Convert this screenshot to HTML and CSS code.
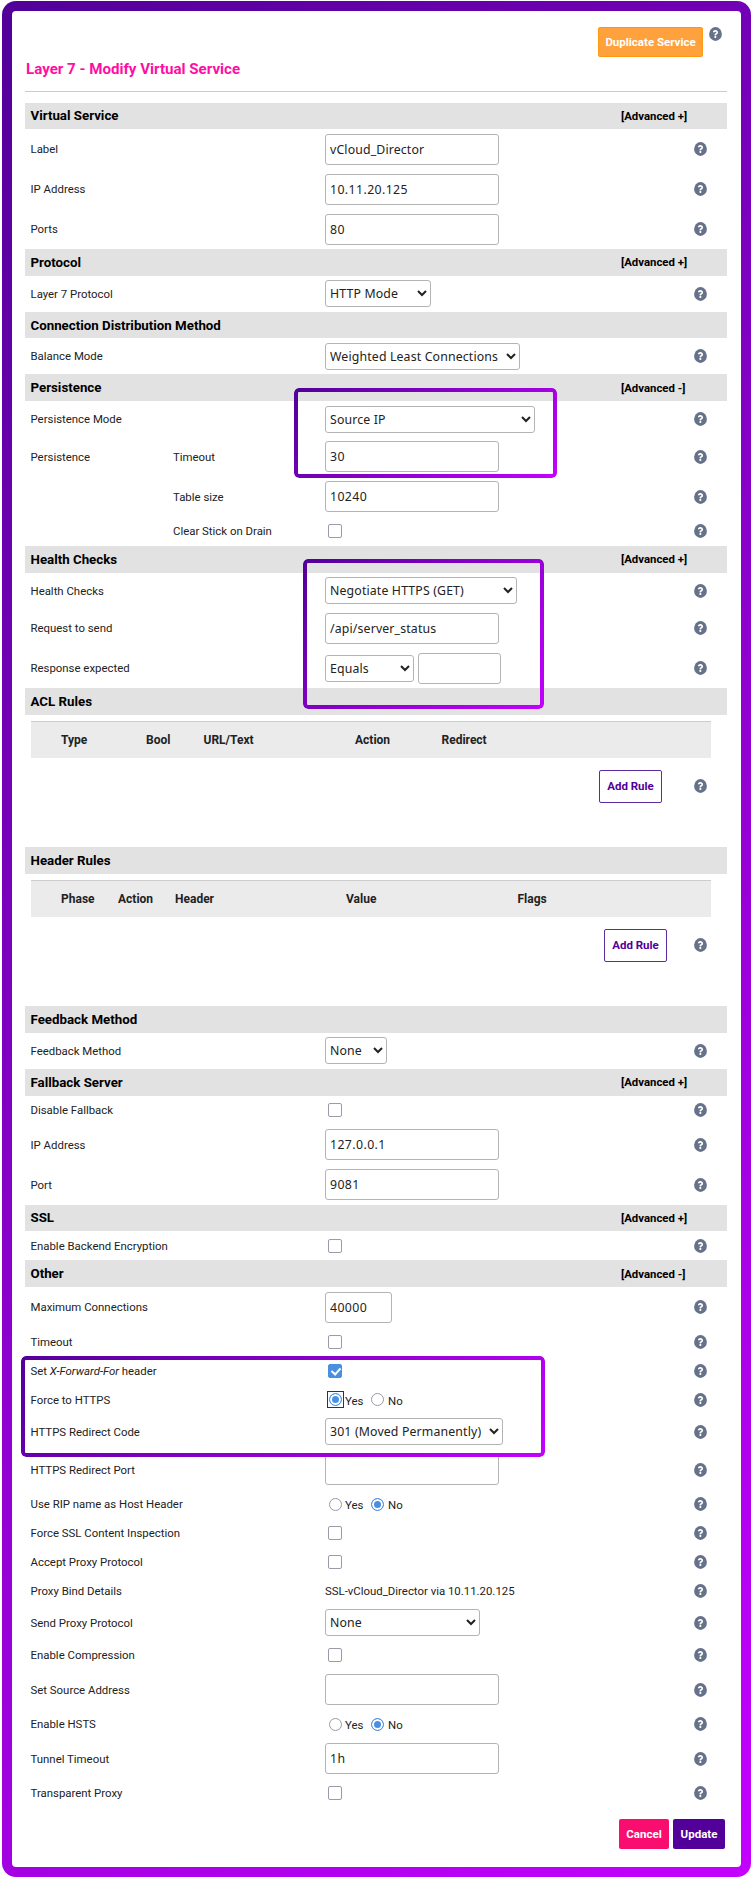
FILE: index.html
```html
<!DOCTYPE html>
<html lang="en">
<head>
  <meta charset="UTF-8">
  <title>Layer 7 - Modify Virtual Service</title>
  <link rel="stylesheet" href="styles.css">
</head>
<body>

  <!-- Help icon, reused on every row -->
  <svg class="sprite" width="0" height="0">
    <symbol id="help" viewBox="0 0 512 512" preserveAspectRatio="none">
      <circle cx="256" cy="256" r="252" fill="#66718a"/>
      <path fill="#fff" transform="translate(31 33) scale(.86)" d="M262.655 90c-54.497 0-89.255 22.957-116.549 63.758-3.536 5.286-2.353 12.415 2.715 16.258l34.699 26.31c5.205 3.947 12.621 3.008 16.665-2.122 17.864-22.658 30.113-35.797 57.303-35.797 20.429 0 45.698 13.148 45.698 32.958 0 14.976-12.363 22.667-32.534 33.976C247.128 238.528 216 254.941 216 296v4c0 6.627 5.373 12 12 12h56c6.627 0 12-5.373 12-12v-1.333c0-28.462 83.186-29.647 83.186-106.667 0-58.002-60.165-102-116.531-102zM256 338c-25.365 0-46 20.635-46 46 0 25.364 20.635 46 46 46s46-20.636 46-46c0-25.364-20.635-46-46-46z"/>
    </symbol>
  </svg>

  <div class="frame">
    <div class="page">

      <div class="top">
        <h1>Layer 7 - Modify Virtual Service</h1>
        <button class="btn duplicate">Duplicate Service</button>
        <svg class="help"><use href="#help"/></svg>
      </div>

      <!-- Virtual Service -->
      <h2>Virtual Service <a class="adv">[Advanced +]</a></h2>
      <div class="row text"><label>Label</label><div class="field"><input type="text" value="vCloud_Director"></div><svg class="help"><use href="#help"/></svg></div>
      <div class="row text"><label>IP Address</label><div class="field"><input type="text" class="num" value="10.11.20.125"></div><svg class="help"><use href="#help"/></svg></div>
      <div class="row text"><label>Ports</label><div class="field"><input type="text" class="num" value="80"></div><svg class="help"><use href="#help"/></svg></div>

      <!-- Protocol -->
      <h2>Protocol <a class="adv">[Advanced +]</a></h2>
      <div class="row pick"><label>Layer 7 Protocol</label><div class="field"><select class="w-http"><option>HTTP Mode</option></select></div><svg class="help"><use href="#help"/></svg></div>

      <!-- Connection Distribution Method -->
      <h2>Connection Distribution Method</h2>
      <div class="row pick"><label>Balance Mode</label><div class="field"><select class="w-balance"><option>Weighted Least Connections</option></select></div><svg class="help"><use href="#help"/></svg></div>

      <!-- Persistence -->
      <h2>Persistence <a class="adv">[Advanced -]</a></h2>
      <div class="row pick"><label>Persistence Mode</label><div class="field"><select class="w-persist"><option>Source IP</option></select></div><svg class="help"><use href="#help"/></svg></div>
      <div class="row text"><label>Persistence</label><label class="sub">Timeout</label><div class="field"><input type="text" class="num" value="30"></div><svg class="help"><use href="#help"/></svg></div>
      <div class="row text"><label class="sub">Table size</label><div class="field"><input type="text" class="num" value="10240"></div><svg class="help"><use href="#help"/></svg></div>
      <div class="row check"><label class="sub">Clear Stick on Drain</label><div class="field"><input type="checkbox"></div><svg class="help"><use href="#help"/></svg></div>

      <!-- Health Checks -->
      <h2>Health Checks <a class="adv">[Advanced +]</a></h2>
      <div class="row pick"><label>Health Checks</label><div class="field"><select class="w-health"><option>Negotiate HTTPS (GET)</option></select></div><svg class="help"><use href="#help"/></svg></div>
      <div class="row text"><label>Request to send</label><div class="field"><input type="text" value="/api/server_status"></div><svg class="help"><use href="#help"/></svg></div>
      <div class="row text"><label>Response expected</label><div class="field"><select class="w-equals"><option>Equals</option></select><input type="text" class="w-expected"></div><svg class="help"><use href="#help"/></svg></div>

      <!-- ACL Rules -->
      <h2>ACL Rules</h2>
      <div class="rules">
        <div class="rules-head acl"><span>Type</span><span>Bool</span><span>URL/Text</span><span>Action</span><span>Redirect</span></div>
        <div class="rules-foot"><button class="btn add">Add Rule</button><svg class="help"><use href="#help"/></svg></div>
      </div>

      <!-- Header Rules -->
      <h2>Header Rules</h2>
      <div class="rules">
        <div class="rules-head hdr"><span>Phase</span><span>Action</span><span>Header</span><span>Value</span><span>Flags</span></div>
        <div class="rules-foot near"><button class="btn add">Add Rule</button><svg class="help"><use href="#help"/></svg></div>
      </div>

      <!-- Feedback Method -->
      <h2>Feedback Method</h2>
      <div class="row pick"><label>Feedback Method</label><div class="field"><select class="w-feedback"><option>None</option></select></div><svg class="help"><use href="#help"/></svg></div>

      <!-- Fallback Server -->
      <h2>Fallback Server <a class="adv">[Advanced +]</a></h2>
      <div class="row check"><label>Disable Fallback</label><div class="field"><input type="checkbox"></div><svg class="help"><use href="#help"/></svg></div>
      <div class="row text"><label>IP Address</label><div class="field"><input type="text" class="num" value="127.0.0.1"></div><svg class="help"><use href="#help"/></svg></div>
      <div class="row text"><label>Port</label><div class="field"><input type="text" class="num" value="9081"></div><svg class="help"><use href="#help"/></svg></div>

      <!-- SSL -->
      <h2>SSL <a class="adv">[Advanced +]</a></h2>
      <div class="row check"><label>Enable Backend Encryption</label><div class="field"><input type="checkbox"></div><svg class="help"><use href="#help"/></svg></div>

      <!-- Other -->
      <h2>Other <a class="adv">[Advanced -]</a></h2>
      <div class="row text"><label>Maximum Connections</label><div class="field"><input type="text" class="num w-max" value="40000"></div><svg class="help"><use href="#help"/></svg></div>
      <div class="row check"><label>Timeout</label><div class="field"><input type="checkbox"></div><svg class="help"><use href="#help"/></svg></div>
      <div class="row check"><label>Set <em>X-Forward-For</em> header</label><div class="field"><input type="checkbox" checked></div><svg class="help"><use href="#help"/></svg></div>
      <div class="row check"><label>Force to HTTPS</label><div class="field"><span class="focused"><input type="radio" name="https" checked></span><span class="opt">Yes</span><input type="radio" name="https"><span class="opt">No</span></div><svg class="help"><use href="#help"/></svg></div>
      <div class="row pick"><label>HTTPS Redirect Code</label><div class="field"><select class="w-code"><option>301 (Moved Permanently)</option></select></div><svg class="help"><use href="#help"/></svg></div>
      <div class="row text"><label>HTTPS Redirect Port</label><div class="field"><input type="text"></div><svg class="help"><use href="#help"/></svg></div>
      <div class="row check"><label>Use RIP name as Host Header</label><div class="field"><input type="radio" name="rip"><span class="opt">Yes</span><input type="radio" name="rip" checked><span class="opt">No</span></div><svg class="help"><use href="#help"/></svg></div>
      <div class="row check"><label>Force SSL Content Inspection</label><div class="field"><input type="checkbox"></div><svg class="help"><use href="#help"/></svg></div>
      <div class="row check"><label>Accept Proxy Protocol</label><div class="field"><input type="checkbox"></div><svg class="help"><use href="#help"/></svg></div>
      <div class="row plain"><label>Proxy Bind Details</label><div class="field">SSL-vCloud_Director via 10.11.20.125</div><svg class="help"><use href="#help"/></svg></div>
      <div class="row pick"><label>Send Proxy Protocol</label><div class="field"><select class="w-proxy"><option>None</option></select></div><svg class="help"><use href="#help"/></svg></div>
      <div class="row check"><label>Enable Compression</label><div class="field"><input type="checkbox"></div><svg class="help"><use href="#help"/></svg></div>
      <div class="row text"><label>Set Source Address</label><div class="field"><input type="text"></div><svg class="help"><use href="#help"/></svg></div>
      <div class="row check"><label>Enable HSTS</label><div class="field"><input type="radio" name="hsts"><span class="opt">Yes</span><input type="radio" name="hsts" checked><span class="opt">No</span></div><svg class="help"><use href="#help"/></svg></div>
      <div class="row text"><label>Tunnel Timeout</label><div class="field"><input type="text" class="num" value="1h"></div><svg class="help"><use href="#help"/></svg></div>
      <div class="row check"><label>Transparent Proxy</label><div class="field"><input type="checkbox"></div><svg class="help"><use href="#help"/></svg></div>

      <div class="actions">
        <button class="btn cancel">Cancel</button>
        <button class="btn update">Update</button>
      </div>
    </div>

    <!-- Callout outlines over the form -->
    <div class="callout callout-persist"></div>
    <div class="callout callout-health"></div>
    <div class="callout callout-https"></div>
  </div>

</body>
</html>
```
FILE: styles.css
```css
* {
  box-sizing: border-box;
}

body {
  margin: 0;
  background: #fff;
  color: #222;
  font-family: Roboto, sans-serif;
  font-size: 11.4px;
}

.sprite {
  position: absolute;
}

/* Gradient frame round the whole page */
.frame {
  position: relative;
  width: 749px;
  height: 1876px;
  margin: 1px 0 0 2px;
  padding: 10px;
  border-radius: 14px;
  background: linear-gradient(135deg, #520099, #c400ff);
}

.page {
  height: 100%;
  padding: 0 14px 0 13px;
  border-radius: 4px;
  background: #fff;
}

/* Title and duplicate button */
.top {
  display: flex;
  align-items: flex-start;
  height: 81px;
  margin-bottom: 10.5px;
  padding: 16px 5px 0 1px;
  border-bottom: 1px solid #ccc;
}

h1 {
  flex: 1;
  margin: 33px 0 0;
  color: #ff0da4;
  font-size: 15.1px;
  line-height: 18px;
  font-weight: bold;
}

.top .help {
  margin-left: 6px;
}

/* Section bars */
h2 {
  display: flex;
  align-items: center;
  height: 26.8px;
  margin: 0;
  padding: 0 0 0 5.5px;
  background: #e2e2e2;
  color: #000;
  font-size: 13.3px;
  font-weight: bold;
}

.adv {
  width: 106px;
  margin-left: auto;
  font-size: 11.4px;
}

/* Form rows: label, sub label, field, help */
.row {
  display: grid;
  grid-template-columns: 142.5px 152px 1fr 14px;
  align-items: center;
  padding: 0 19px 0 5.5px;
}

.row.text { height: 39.9px; }
.row.pick { height: 35.9px; }
.row.check { height: 29px; }
.row.plain { height: 28px; }

label {
  grid-column: 1;
  white-space: nowrap;
}

label.sub {
  grid-column: 2;
}

.field {
  grid-column: 3;
  display: flex;
  align-items: center;
}

.help {
  width: 13px;
  height: 14px;
}

.row .help {
  grid-column: 4;
}

/* Controls */
input[type="text"], select {
  margin: 0;
  border: 1px solid #b4b4b4;
  border-radius: 3px;
  background-color: #fff;
  color: #222;
  font-family: "Noto Sans", sans-serif;
  font-size: 12.3px;
  letter-spacing: 0.15px;
}

input[type="text"] {
  width: 174px;
  height: 31px;
  padding: 0 4px;
}

input.num {
  letter-spacing: 0.4px;
}

select {
  height: 27px;
  padding: 0;
}

.w-http { width: 106px; }
.w-balance { width: 195px; }
.w-persist { width: 210px; }
.w-health { width: 192px; }
.w-equals { width: 89px; }
.w-feedback { width: 62px; }
.w-code { width: 178px; }
.w-proxy { width: 155px; }
input.w-expected { width: 83px; margin-left: 4px; }
input.w-max { width: 67px; }

input[type="checkbox"], input[type="radio"] {
  appearance: none;
  width: 14px;
  height: 14px;
  margin: 0 0 0 3px;
  border: 1px solid #9a9aa8;
  border-radius: 2px;
  background: #fff;
}

input[type="checkbox"]:checked {
  border-color: #4a90e2;
  background: #4a90e2;
}

input[type="checkbox"]:checked::after {
  content: "";
  display: block;
  width: 4px;
  height: 7px;
  margin: 1px 0 0 4px;
  border: solid #fff;
  border-width: 0 2px 2px 0;
  transform: rotate(42deg);
}

input[type="radio"] {
  width: 13px;
  height: 13px;
  margin-left: 4px;
  border-radius: 50%;
}

input[type="radio"]:checked {
  border-color: #4a90e2;
  background: #4a90e2;
  box-shadow: inset 0 0 0 2px #fff;
}

/* Square focus ring round the radio */
.focused {
  display: flex;
  margin-left: 4px;
  outline: 1px solid #333;
  outline-offset: 1px;
}

.focused input[type="radio"] {
  margin-left: 0;
}

.opt {
  width: 29px;
  padding: 2px 0 0 3px;
}

.opt + input[type="radio"] {
  margin-left: 0;
}

.opt:last-child {
  padding-left: 4px;
}

/* Rule tables */
.rules {
  height: 132.2px;
  padding: 5.5px 16px 0 6px;
}

.rules-head {
  display: grid;
  align-items: center;
  height: 37px;
  padding-left: 30px;
  border-top: 1px solid #ccc;
  background: #ebebeb;
  font-size: 12px;
  font-weight: bold;
}

.rules-head.acl { grid-template-columns: 85px 57.5px 151.5px 86.5px 1fr; }
.rules-head.hdr { grid-template-columns: 57px 57px 171px 171.5px 1fr; }

.rules-foot {
  display: flex;
  justify-content: flex-end;
  align-items: center;
  gap: 32px;
  margin-top: 12px;
  padding-right: 4px;
}

.rules-foot.near {
  gap: 27px;
}

/* Buttons */
.btn {
  height: 30px;
  padding: 0;
  border: 1px solid transparent;
  border-radius: 2px;
  color: #fff;
  font-family: Roboto, sans-serif;
  font-size: 11.5px;
  font-weight: bold;
}

.duplicate {
  width: 105px;
  border-color: #ff9a0e;
  background: #ffa23e;
}

.add {
  width: 63px;
  height: 33px;
  border-color: #5b2ca0;
  background: #fff;
  color: #520099;
}

.actions {
  display: flex;
  justify-content: flex-end;
  gap: 4px;
  padding: 12px 2px 0;
}

.cancel {
  width: 50px;
  background: #f90d6e;
}

.update {
  width: 52px;
  background: #520099;
}

/* Callouts: gradient outline with an open middle */
.callout {
  position: absolute;
  padding: 4px;
  border-radius: 5px;
  background: linear-gradient(135deg, #520099, #c400ff);
  mask: linear-gradient(#000 0 0) content-box exclude, linear-gradient(#000 0 0);
  pointer-events: none;
}

.callout-persist {
  left: 292px;
  top: 387px;
  width: 263px;
  height: 90px;
}

.callout-health {
  left: 301px;
  top: 558px;
  width: 241px;
  height: 150px;
}

.callout-https {
  left: 19px;
  top: 1355px;
  width: 524px;
  height: 101px;
}
```
